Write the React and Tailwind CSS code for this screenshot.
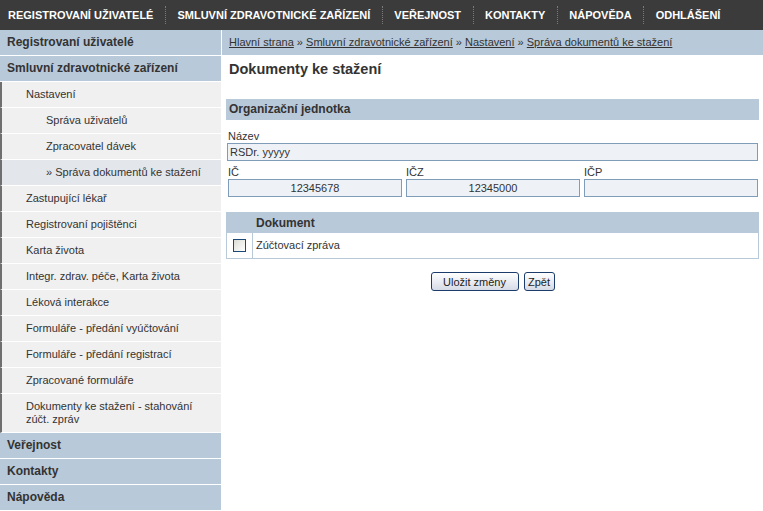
import React from 'react';

const topMenu = ['REGISTROVANÍ UŽIVATELÉ', 'SMLUVNÍ ZDRAVOTNICKÉ ZAŘÍZENÍ', 'VEŘEJNOST', 'KONTAKTY', 'NÁPOVĚDA', 'ODHLÁŠENÍ'];

const subItems = [
  { label: 'Nastavení', level: 1 },
  { label: 'Správa uživatelů', level: 2 },
  { label: 'Zpracovatel dávek', level: 2 },
  { label: '» Správa dokumentů ke stažení', level: 2, active: true },
  { label: 'Zastupující lékař', level: 1 },
  { label: 'Registrovaní pojištěnci', level: 1 },
  { label: 'Karta života', level: 1 },
  { label: 'Integr. zdrav. péče, Karta života', level: 1 },
  { label: 'Léková interakce', level: 1 },
  { label: 'Formuláře - předání vyúčtování', level: 1 },
  { label: 'Formuláře - předání registrací', level: 1 },
  { label: 'Zpracované formuláře', level: 1 },
  { label: 'Dokumenty ke stažení - stahování zúčt. zpráv', level: 1 },
];

const font = { fontFamily: '"Liberation Sans", Arial, sans-serif' };

const Header = ({ children }) => (
  <div className="h-[26px] border-b border-white bg-[#b8c9d9] px-[7px] text-[12px] font-bold leading-[25px] text-[#333]">
    {children}
  </div>
);

export default function App() {
  return (
    <div className="min-h-[511px] bg-white text-[#333]" style={font}>
      <nav className="flex h-[30px] items-center bg-[#3b3b3b] pl-[8px]">
        {topMenu.map((item, i) => (
          <div key={item} className="flex items-center">
            {i > 0 && <span className="mx-[11.5px] h-[18px] border-l border-dotted border-[#7a7a7a]" />}
            <span className="text-[11px] font-bold text-white">{item}</span>
          </div>
        ))}
      </nav>

      <div className="flex">
        <aside className="w-[221px] shrink-0">
          <Header>Registrovaní uživatelé</Header>
          <Header>Smluvní zdravotnické zařízení</Header>
          {subItems.map((it) => (
            <div
              key={it.label}
              className={`border-b border-l-2 border-b-white border-l-[#6f6f6f] py-[6px] pr-2 text-[11px] leading-[13px] ${it.active ? 'bg-[#e3e7eb]' : 'bg-[#f0f0f0]'} ${it.level === 2 ? 'pl-[44px]' : 'pl-[24px]'}`}
            >
              {it.label}
            </div>
          ))}
          <Header>Veřejnost</Header>
          <Header>Kontakty</Header>
          <Header>Nápověda</Header>
        </aside>

        <main className="ml-px flex-1">
          <div className="h-[25px] bg-[#b8c9d9] pl-[7px] text-[11px] leading-[25px]">
            <span className="underline">Hlavní strana</span> » <span className="underline">Smluvní zdravotnické zařízení</span> » <span className="underline">Nastavení</span> » <span className="underline">Správa dokumentů ke stažení</span>
          </div>
          <h1 className="pl-[7px] pt-[5px] text-[14.5px] font-bold leading-[18px] text-[#333]">Dokumenty ke stažení</h1>

          <div className="ml-[4px] mr-[4px] mt-[21px]">
            <div className="h-[21px] bg-[#b8c9d9] pl-[3px] text-[12px] font-bold leading-[21px]">Organizační jednotka</div>
            <div className="mt-[9px] pl-[2px] text-[11px] leading-[14px]">Název</div>
            <div className="ml-px mr-px h-[18px] border border-[#7f9db9] bg-[#eef2f7] pl-[2px] text-[11px] leading-[16px]">RSDr. yyyyy</div>
            <div className="mt-[4px] grid grid-cols-3 gap-[4px] pr-px pl-[2px]">
              {[['IČ', '12345678'], ['IČZ', '12345000'], ['IČP', '']].map(([l, v]) => (
                <div key={l}>
                  <div className="text-[11px] leading-[14px]">{l}</div>
                  <div className="h-[18px] border border-[#7f9db9] bg-[#eef2f7] text-center text-[11px] leading-[16px]">{v}</div>
                </div>
              ))}
            </div>

            <div className="mt-[15px] border border-[#b8c9d9]">
              <div className="flex h-[20px] bg-[#b8c9d9] text-[12px] font-bold leading-[20px]">
                <div className="w-[26px]" />
                <div className="pl-[3px]">Dokument</div>
              </div>
              <div className="flex h-[25px]">
                <div className="flex w-[26px] items-center justify-center border-r border-[#b8c9d9]">
                  <span className="h-[13px] w-[13px] border border-[#1c4a78] bg-gradient-to-br from-[#dcdcd6] to-white" />
                </div>
                <div className="pl-[3px] text-[11px] leading-[25px]">Zúčtovací zpráva</div>
              </div>
            </div>

            <div className="mt-[13px] flex justify-center gap-[5px]">
              <button className="h-[19px] w-[88px] rounded-[3px] border border-[#1c3d6b] bg-gradient-to-b from-white to-[#d6dbe6] text-[11px] leading-[16px] text-[#222]">Uložit změny</button>
              <button className="h-[19px] w-[31px] rounded-[3px] border border-[#1c3d6b] bg-gradient-to-b from-white to-[#d6dbe6] text-[11px] leading-[16px] text-[#222]">Zpět</button>
            </div>
          </div>
        </main>
      </div>
    </div>
  );
}
